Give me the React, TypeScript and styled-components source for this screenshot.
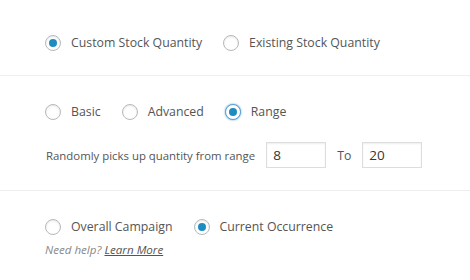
import React, { useState } from 'react';
import styled, { createGlobalStyle } from 'styled-components';

const GlobalStyle = createGlobalStyle`
    html, body {
        margin: 0;
        padding: 0;
        background: #fff;
    }
    body {
        font-family: "Open Sans", "Noto Sans", sans-serif;
        font-size: 12.3px;
        color: #555;
    }
`;

const App = () => {
    const [source, setSource] = useState('custom');
    const [mode, setMode] = useState('range');
    const [scope, setScope] = useState('current');
    const [from, setFrom] = useState('8');
    const [to, setTo] = useState('20');

    return <Page>
        <GlobalStyle />
        <Section top={35} bottom={24}>
            <RadioRow>
                <Radio label='Custom Stock Quantity' checked={source === 'custom'} onSelect={() => setSource('custom')} />
                <Radio label='Existing Stock Quantity' checked={source === 'existing'} onSelect={() => setSource('existing')} />
            </RadioRow>
        </Section>

        <Section top={28} bottom={22}>
            <RadioRow>
                <Radio label='Basic' checked={mode === 'basic'} onSelect={() => setMode('basic')} />
                <Radio label='Advanced' checked={mode === 'advanced'} onSelect={() => setMode('advanced')} />
                <Radio label='Range' checked={mode === 'range'} focused onSelect={() => setMode('range')} />
            </RadioRow>
            <RangeRow>
                <RangeLabel>Randomly picks up quantity from range</RangeLabel>
                <NumberInput value={from} onChange={e => setFrom(e.target.value)} />
                <ToLabel>To</ToLabel>
                <NumberInput value={to} onChange={e => setTo(e.target.value)} />
            </RangeRow>
        </Section>

        <Section top={28} bottom={20} last>
            <RadioRow>
                <Radio label='Overall Campaign' checked={scope === 'overall'} onSelect={() => setScope('overall')} />
                <Radio label='Current Occurrence' checked={scope === 'current'} onSelect={() => setScope('current')} />
            </RadioRow>
            <Help>Need help? <HelpLink href='#'>Learn More</HelpLink></Help>
        </Section>
    </Page>
};

const Radio = (props: iRadioProps) => {
    return <Option onClick={props.onSelect}>
        <Circle checked={props.checked} focused={!!props.focused} />
        <OptionLabel>{props.label}</OptionLabel>
    </Option>
};

interface iRadioProps {
    label: string;
    checked: boolean;
    focused?: boolean;
    onSelect: () => void;
}

const Page = styled.div`
    width: 470px;
`;

const Section = styled.div<{ top: number; bottom: number; last?: boolean }>`
    padding: ${p => p.top}px 0 ${p => p.bottom}px 45px;
    border-bottom: ${p => p.last ? 'none' : '1px solid #eee'};
`;

const RadioRow = styled.div`
    display: flex;
    align-items: center;
    gap: 21px;
    height: 16px;
`;

const Option = styled.label`
    display: flex;
    align-items: center;
    gap: 10px;
    cursor: pointer;
    line-height: 16px;
`;

const Circle = styled.span<{ checked: boolean; focused: boolean }>`
    position: relative;
    width: 16px;
    height: 16px;
    box-sizing: border-box;
    border-radius: 50%;
    border: 1px solid ${p => p.focused ? '#5b9dd9' : '#b4b9be'};
    background: #fff;
    box-shadow: ${p => p.focused
        ? '0 0 2px rgba(30, 140, 190, 0.8)'
        : 'inset 0 1px 2px rgba(0, 0, 0, 0.1)'};
    flex: none;

    &::after {
        content: '';
        display: ${p => p.checked ? 'block' : 'none'};
        position: absolute;
        left: 3px;
        top: 3px;
        width: 8px;
        height: 8px;
        border-radius: 50%;
        background: #1e8cbe;
    }
`;

const OptionLabel = styled.span`
    white-space: nowrap;
`;

const RangeRow = styled.div`
    display: flex;
    align-items: center;
    margin: 22px 0 0 1px;
`;

const RangeLabel = styled.span`
    font-size: 11.4px;
    margin-right: 11px;
`;

const ToLabel = styled.span`
    margin: 0 11px;
`;

const NumberInput = styled.input`
    width: 60px;
    height: 26px;
    box-sizing: border-box;
    border: 1px solid #ddd;
    box-shadow: inset 0 1px 2px rgba(0, 0, 0, 0.07);
    padding: 0 6px;
    font-family: "Open Sans", "Noto Sans", sans-serif;
    font-size: 13.5px;
    color: #32373c;
    outline: none;
`;

const Help = styled.div`
    margin-top: 6px;
    font-size: 11.6px;
    font-style: italic;
    color: #888;
    line-height: 18px;
`;

const HelpLink = styled.a`
    color: #555;
    text-decoration: underline;
`;

export default App;
